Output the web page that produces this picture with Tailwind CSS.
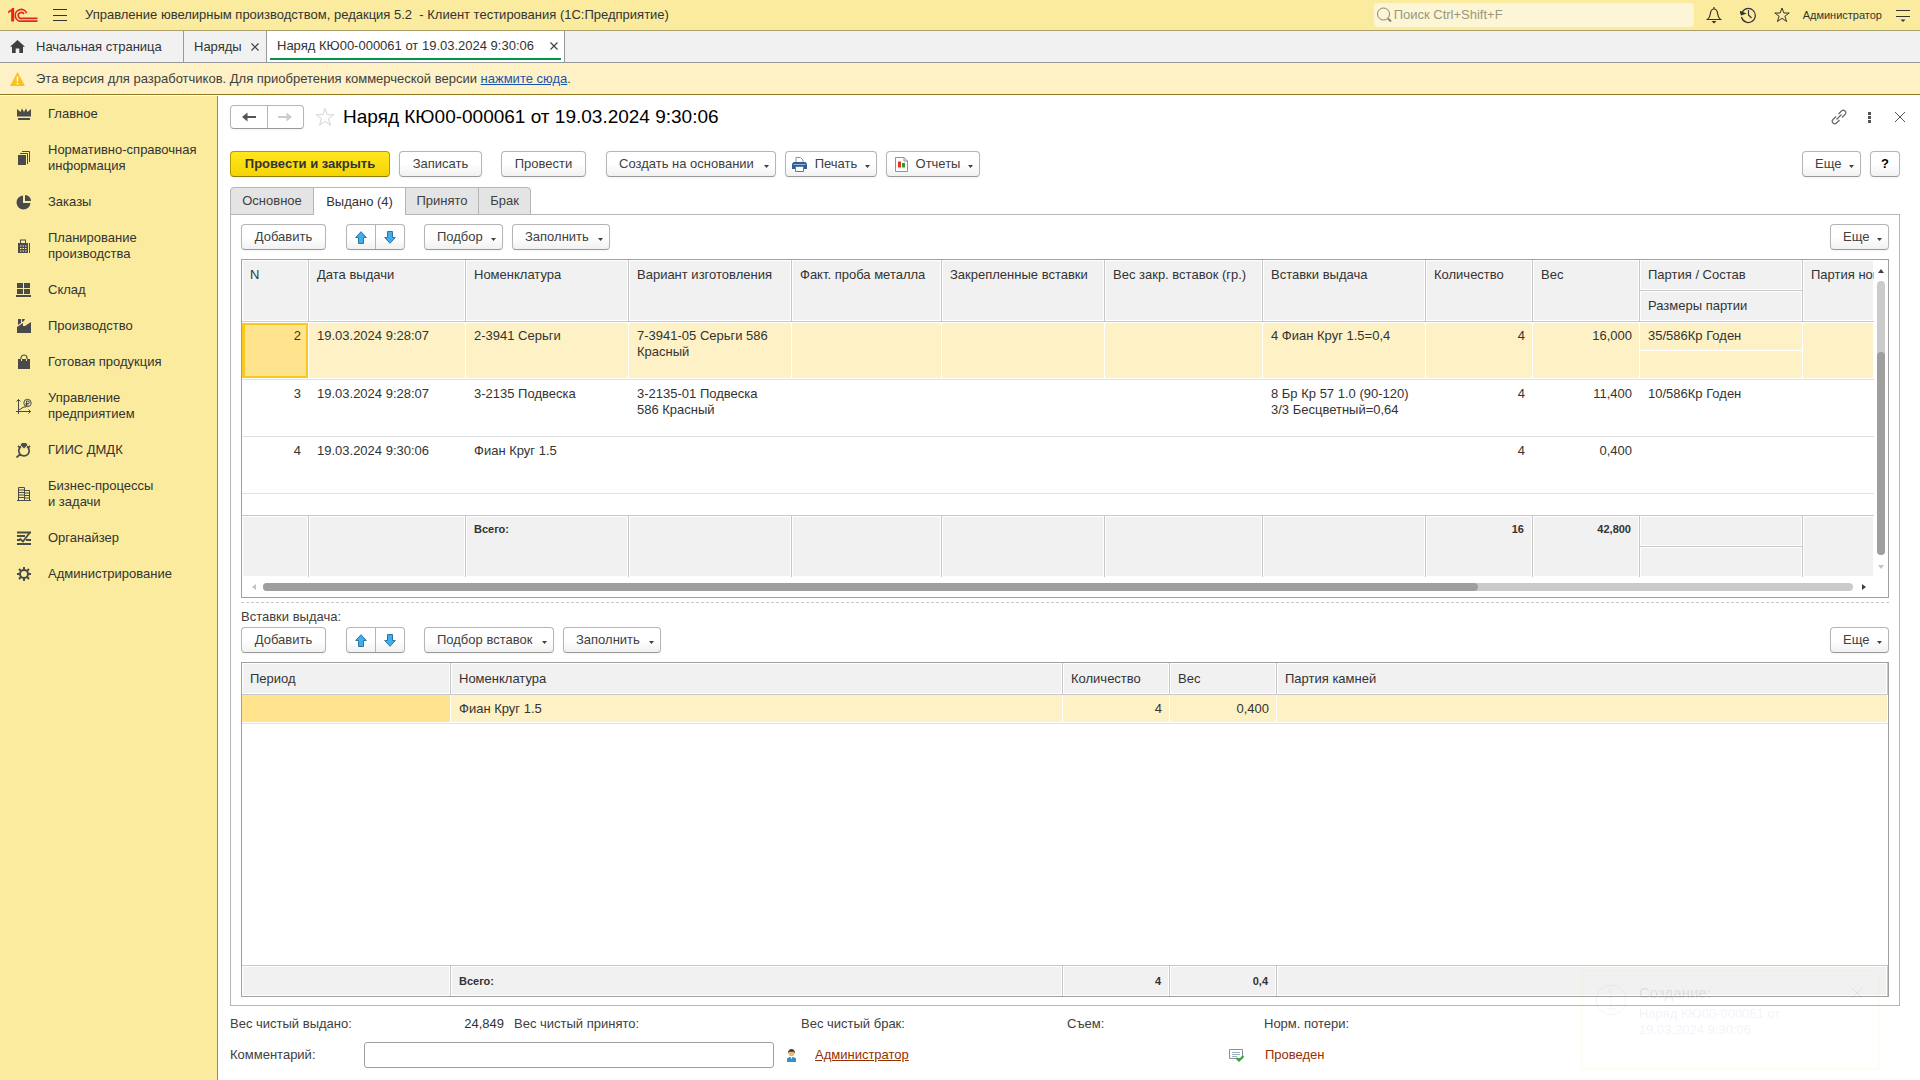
<!DOCTYPE html>
<html lang="ru">
<head>
<meta charset="utf-8">
<title>Наряд КЮ00-000061 от 19.03.2024 9:30:06</title>
<script src="https://cdn.jsdelivr.net/npm/@tailwindcss/browser@4"></script>
</head>
<body class="min-h-screen flex flex-col bg-white font-['Liberation_Sans',Arial,sans-serif] text-[13px] leading-4 text-[#404040]">

<svg class="hidden" aria-hidden="true">
  <symbol id="up" viewBox="0 0 12 13"><path d="M6 .7 11.3 6.5H8.5v6h-5v-6H.7z" fill="#41aeea" stroke="#2b76a3"/></symbol>
  <symbol id="down" viewBox="0 0 12 13"><path d="M6 12.3 11.3 6.5H8.5v-6h-5v6H.7z" fill="#41aeea" stroke="#2b76a3"/></symbol>
  <symbol id="caret" viewBox="0 0 5 3"><path d="M0 0h5L2.5 3z" fill="#404040"/></symbol>
</svg>

<header class="h-[31px] flex items-center bg-[#faeb9e] border-b border-[#a9a06c] pl-2 pr-2.5 text-[#333]">
  <svg class="w-[30px] h-[15px] shrink-0" viewBox="0 0 30 15" fill="none" stroke="#e0281e" stroke-width="1.7"><path d="M0 4.5 4 1.6V13.5M1 3.8 5.3.9V13.5"/><path d="M18.6 5.2A5.9 5.9 0 1 0 14 13.2H29.5"/><path d="M15.9 6A3 3 0 1 0 14 10.4H29.5"/></svg>
  <button class="ml-[15px] w-[14px] h-[14px] flex flex-col justify-between py-px shrink-0" aria-label="Меню"><span class="block h-px w-full bg-[#333]"></span><span class="block h-px w-full bg-[#333]"></span><span class="block h-px w-full bg-[#333]"></span></button>
  <div class="ml-[18px] whitespace-pre">Управление ювелирным производством, редакция 5.2  - Клиент тестирования (1С:Предприятие)</div>
  <label class="ml-auto w-80 h-6 flex items-center bg-[#fdf6d6] rounded-sm px-0.5 mr-[12px]">
    <svg class="w-4 h-4 shrink-0" viewBox="0 0 16 16" fill="none" stroke="#8a8568"><circle cx="7.5" cy="7" r="6"/><path d="m12 11.500 3 3" stroke-width="2"/></svg>
    <input type="search" aria-label="Поиск" placeholder="Поиск Ctrl+Shift+F" class="flex-1 min-w-0 bg-transparent outline-none pl-0.5 placeholder:text-[#9b9679]">
  </label>
  <button aria-label="Уведомления"><svg class="w-4 h-[18px]" viewBox="0 0 16 18" fill="none" stroke="#333" stroke-width="1.2"><path d="M1.500 13.500c2-1.500 2.500-3 2.800-5.500C4.700 4.500 5.500 3 8 3s3.300 1.500 3.700 5c.3 2.500.8 4 2.800 5.500zM8 3V1"/><path d="M5.500 15h5L8 17.500z" fill="#333" stroke="none"/></svg></button>
  <button class="ml-[18px]" aria-label="История"><svg class="w-4 h-[18px]" viewBox="0 0 16 18" fill="none" stroke="#333" stroke-width="1.200"><path d="M2 6.500A7 7 0 1 1 1.500 11M8.500 4v5l3 3"/><path d="M0 5.500 5 7.500 1.500 8.800z" fill="#333"/></svg></button>
  <button class="ml-[18px]" aria-label="Избранное"><svg class="w-4 h-4" viewBox="0 0 16 16" fill="none" stroke="#333"><path d="m8 1 1.900 5h5.300l-4.300 3.200 1.700 5.300L8 11.300l-4.600 3.200 1.700-5.300L.8 6h5.300z"/></svg></button>
  <span class="ml-[13px] text-[11px]">Администратор</span>
  <button class="ml-[14px]" aria-label="Настройки"><svg class="w-[14px] h-4" viewBox="0 0 14 16"><path d="M0 3.500h14M0 9.500h14" stroke="#333"/><path d="M4.500 12.500h5L7 15z" fill="#333"/></svg></button>
</header>

<nav class="h-8 flex bg-[#f1f1f1] border-b border-[#999] text-[#333]">
  <a href="#" class="w-[184px] flex items-center pl-2.5 border-r border-[#999]">
    <svg class="w-[15px] h-[13px] mr-[11px]" viewBox="0 0 15 13"><path d="M7.500 0 15 6.800h-2V13H9.300V8.500H5.700V13H2V6.800H0z" fill="#404040"/></svg>Начальная страница</a>
  <a href="#" class="w-[83px] flex items-center justify-between pl-2.5 pr-[7px] border-r border-[#999]">Наряды
    <svg class="w-2 h-2" viewBox="0 0 8 8" stroke="#404040" stroke-width="1.200"><path d="m.5.5 7 7m0-7-7 7"/></svg></a>
  <a href="#" class="w-[298px] px-[3px] pb-0.5 flex bg-white border-r border-[#999]"><span class="flex-1 flex items-center justify-between pl-[7px] pr-[3px] pt-0.5 border-b-2 border-[#009646]">Наряд КЮ00-000061 от 19.03.2024 9:30:06
    <svg class="w-2 h-2" viewBox="0 0 8 8" stroke="#404040" stroke-width="1.200"><path d="m.5.5 7 7m0-7-7 7"/></svg></span></a>
</nav>

<div class="h-8 flex items-center bg-[#fdf1c5] border-b border-[#8f7a1f] pl-2.5">
  <svg class="w-[15px] h-[14px] mr-[11px]" viewBox="0 0 15 14"><path d="M7.500 0 15 14H0z" fill="#fbc01c"/><path d="M7.500 4.500v5M7.500 10.800v1.600" stroke="#fff" stroke-width="1.500"/></svg>
  <span>Эта версия для разработчиков. Для приобретения коммерческой версии <a href="#" class="text-[#1a54b0] underline">нажмите сюда</a>.</span>
</div>

<div class="flex-1 flex pt-px">
  <aside class="w-[218px] shrink-0 bg-[#faeb9e] border-r border-[#96905f] text-[#333]">
    <ul>
      <li><a href="#" class="flex items-center py-2.5 pl-4"><svg class="w-4 h-4 mr-4 shrink-0" viewBox="0 0 16 16" fill="#4a4a4a"><path d="M1 3l3.500 3L6 2.500 8 6l2-3.500L11.500 6 15 3v7.500H1zM2 12h12v2H2z"/></svg>Главное</a></li>
      <li><a href="#" class="flex items-center py-2.5 pl-4"><svg class="w-4 h-4 mr-4 shrink-0" viewBox="0 0 16 16" fill="#4a4a4a"><path d="M2 5h8v10H2z"/><path d="M4 3.500h7.500V14M6 1.500h7.500V12" fill="none" stroke="#4a4a4a"/></svg><span>Нормативно-справочная<br>информация</span></a></li>
      <li><a href="#" class="flex items-center py-2.5 pl-4"><svg class="w-4 h-4 mr-4 shrink-0" viewBox="0 0 16 16" fill="#4a4a4a"><path d="M7 1.500V9h7.500A7 7 0 1 1 7 1.500z"/><path d="M9 1a6 6 0 0 1 6 6H9z"/></svg>Заказы</a></li>
      <li><a href="#" class="flex items-center py-2.5 pl-4"><svg class="w-4 h-4 mr-4 shrink-0" viewBox="0 0 16 16" fill="#4a4a4a"><path d="M2 5h2V1.500h6V5h2v10H2zM5 2.500V5h4V2.500zM13 5h1v10h-1z" fill-rule="evenodd"/><path d="M4 8h1.500M6.500 8H8M9 8h1.500M4 10.500h1.500M6.500 10.500H8M9 10.500h1.500M4 13h1.500M6.500 13H8M9 13h1.500" stroke="#faeb9e"/></svg><span>Планирование<br>производства</span></a></li>
      <li><a href="#" class="flex items-center py-2.5 pl-4"><svg class="w-4 h-4 mr-4 shrink-0" viewBox="0 0 16 16" fill="#4a4a4a"><path d="M1 1h6v5H1zM8 1h6v5H8zM1 7h6v5H1zM8 7h6v5H8zM0 13h15v2H0z"/></svg>Склад</a></li>
      <li><a href="#" class="flex items-center py-2.5 pl-4"><svg class="w-4 h-4 mr-4 shrink-0" viewBox="0 0 16 16" fill="#4a4a4a"><path d="M1 15V9l6-4v3l2 0 6-4v11zM2 1h3v4L2 7zM6 1h3l-1 2-2 1z"/></svg>Производство</a></li>
      <li><a href="#" class="flex items-center py-2.5 pl-4"><svg class="w-4 h-4 mr-4 shrink-0" viewBox="0 0 16 16" fill="#4a4a4a"><path d="M2 5h12v10H2z"/><path d="M5 7V4a3 3 0 0 1 6 0v3" fill="none" stroke="#4a4a4a" stroke-width="1.200"/><path d="M5.500 5v2M10.500 5v2" stroke="#faeb9e"/></svg>Готовая продукция</a></li>
      <li><a href="#" class="flex items-center py-2.5 pl-4"><svg class="w-4 h-4 mr-4 shrink-0" viewBox="0 0 16 16" fill="none" stroke="#4a4a4a"><path d="M2.500 16V1.500M.5 3.500l2-2 2 2M0 13.500h15M12.500 11.500l2 2-2 2M3 12l3-2 2-1h2"/><circle cx="11.500" cy="5" r="3.700"/><path d="M10.500 8V3H12a1.300 1.300 0 0 1 0 2.600H9.500M9.500 7h3"/></svg><span>Управление<br>предприятием</span></a></li>
      <li><a href="#" class="flex items-center py-2.5 pl-4"><svg class="w-4 h-4 mr-4 shrink-0" viewBox="0 0 16 16" fill="none" stroke="#4a4a4a" stroke-width="1.700"><path d="M5 4.500a5.200 5.200 0 1 0 6 0M4.500 12 .5 15.500"/><path d="M6 1h4l1.500 2L8 6.500 4.500 3z" fill="#4a4a4a" stroke="none"/><path d="M2 4l2.500 2M14 4l-2.500 2"/></svg>ГИИС ДМДК</a></li>
      <li><a href="#" class="flex items-center py-2.5 pl-4"><svg class="w-4 h-4 mr-4 shrink-0" viewBox="0 0 16 16" fill="none" stroke="#4a4a4a"><path d="M2.500 15V1.500h6V15M8.500 4.500h5V15M1 14.500h14M2 4h6M2 6.500h6M2 9h6M2 11.500h6M9 7h4M9 9.500h4M9 12h4"/></svg><span>Бизнес-процессы<br>и задачи</span></a></li>
      <li><a href="#" class="flex items-center py-2.5 pl-4"><svg class="w-4 h-4 mr-4 shrink-0" viewBox="0 0 16 16" fill="none" stroke="#4a4a4a" stroke-width="1.800"><path d="M1 2.500h14M1 6h8M1 10h3M10 10h5M1 14h14M3.500 8.500 7 11.500 13.500 3"/></svg>Органайзер</a></li>
      <li><a href="#" class="flex items-center py-2.5 pl-4"><svg class="w-4 h-4 mr-4 shrink-0" viewBox="0 0 16 16" fill="none" stroke="#4a4a4a" stroke-width="2"><circle cx="8" cy="8" r="4"/><path d="M8 1v3M8 12v3M1 8h3M12 8h3M3 3l2 2M11 11l2 2M3 13l2-2M11 5l2-2"/></svg>Администрирование</a></li>
    </ul>
  </aside>

  <main class="flex-1 min-w-0 flex flex-col pl-3 pr-5 pt-[9px] pb-3">
    <div class="h-6 flex items-center">
      <div class="w-[74px] h-6 flex border border-[#b5b5b5] border-b-[#999] rounded-sm shadow-xs">
        <button class="flex-1 flex items-center justify-center border-r border-[#b5b5b5]" aria-label="Назад"><svg class="w-[14px] h-[10px]" viewBox="0 0 14 10"><path d="M0 5 5.500.5V4H14v2H5.500v3.500z" fill="#555"/></svg></button>
        <button class="flex-1 flex items-center justify-center" aria-label="Вперед"><svg class="w-[14px] h-[10px]" viewBox="0 0 14 10"><path d="M14 5 8.500.5V4H0v2h8.500v3.500z" fill="#ccc"/></svg></button>
      </div>
      <svg class="w-5 h-5 ml-[11px]" viewBox="0 0 20 20" fill="none" stroke="#d4d4d4"><path d="m10 1.500 2.200 6.200h6.600l-5.300 4 2 6.600L10 14.300l-5.500 4 2-6.600-5.300-4h6.600z"/></svg>
      <h1 class="ml-2 text-[19px] leading-6 text-black">Наряд КЮ00-000061 от 19.03.2024 9:30:06</h1>
      <div class="ml-auto flex items-center">
        <button aria-label="Ссылка"><svg class="w-4 h-4" viewBox="0 0 16 16" fill="none" stroke="#666" stroke-width="1.200"><path d="m5.500 10.500 5-5M7.500 5l3-3a2.400 2.400 0 0 1 3.500 3.500l-3 3M8.500 11l-3 3A2.400 2.400 0 0 1 2 10.500l3-3"/></svg></button>
        <button class="ml-[21px]" aria-label="Еще действия"><svg class="w-[3px] h-[11px]" viewBox="0 0 3 11" fill="#555"><path d="M0 0h3v3H0zM0 4h3v3H0zM0 8h3v3H0z"/></svg></button>
        <button class="ml-[24px] mr-[-5px]" aria-label="Закрыть"><svg class="w-[10px] h-[10px]" viewBox="0 0 10 10" stroke="#555"><path d="m0 0 10 10M10 0 0 10"/></svg></button>
      </div>
    </div>

    <div class="mt-[22px] flex items-center">
      <button class="w-40 h-[26px] rounded-sm border border-[#b39b00] border-b-[#8f7c00] bg-linear-to-b from-[#ffe81c] to-[#f5d400] font-bold text-[#333] shadow-xs">Провести и закрыть</button>
      <button class="ml-[9px] w-[83px] h-[26px] rounded-sm border border-[#b5b5b5] border-b-[#999] bg-linear-to-b from-white from-50% to-[#f1f1f1] shadow-xs">Записать</button>
      <button class="ml-[19px] w-[85px] h-[26px] rounded-sm border border-[#b5b5b5] border-b-[#999] bg-linear-to-b from-white from-50% to-[#f1f1f1] shadow-xs">Провести</button>
      <button class="ml-5 w-[170px] h-[26px] flex items-center justify-between pl-3 pr-1.5 rounded-sm border border-[#b5b5b5] border-b-[#999] bg-linear-to-b from-white from-50% to-[#f1f1f1] shadow-xs">Создать на основании<svg class="w-[5px] h-[3px] mt-1"><use href="#caret"/></svg></button>
      <button class="ml-[9px] w-[92px] h-[26px] flex items-center justify-between px-1.5 rounded-sm border border-[#b5b5b5] border-b-[#999] bg-linear-to-b from-white from-50% to-[#f1f1f1] shadow-xs"><svg class="w-[15px] h-[15px]" viewBox="0 0 15 15"><path d="M4 6V.5h4.500L11 3v3" fill="#fff" stroke="#7d95ab"/><path d="M1.500 5h12L15 7v5H0V7z" fill="#2f5f8f"/><path d="M1.500 7.500h12" stroke="#9bb8d3"/><path d="M3.500 9.500h8v5h-8z" fill="#fff" stroke="#5c7d9c"/></svg>Печать<svg class="w-[5px] h-[3px] mt-1"><use href="#caret"/></svg></button>
      <button class="ml-[9px] w-[94px] h-[26px] flex items-center justify-between pl-2 pr-1.5 rounded-sm border border-[#b5b5b5] border-b-[#999] bg-linear-to-b from-white from-50% to-[#f1f1f1] shadow-xs"><svg class="w-[13px] h-[15px]" viewBox="0 0 13 15"><path d="M.5.5h8.500l3.500 3.500v10.500H.5zM9 .5V4h3.500" fill="#fff" stroke="#8296a8"/><path d="M3 4.500h3v6H3z" fill="#e8321e"/><path d="M7 6h3v4.500H7z" fill="#2e9b2e"/></svg>Отчеты<svg class="w-[5px] h-[3px] mt-1"><use href="#caret"/></svg></button>
      <button class="ml-auto w-[59px] h-[26px] flex items-center justify-between pl-3 pr-1.5 rounded-sm border border-[#b5b5b5] border-b-[#999] bg-linear-to-b from-white from-50% to-[#f1f1f1] shadow-xs">Еще<svg class="w-[5px] h-[3px] mt-1"><use href="#caret"/></svg></button>
      <button class="ml-[9px] w-[30px] h-[26px] rounded-sm border border-[#b5b5b5] border-b-[#999] bg-linear-to-b from-white from-50% to-[#f1f1f1] shadow-xs font-bold text-black">?</button>
    </div>

    <div class="mt-2.5 flex h-[28px] -mb-px z-10" role="tablist">
      <button role="tab" class="w-[84px] border border-[#b5b5b5] rounded-tl-sm bg-[#e4e4e4]">Основное</button>
      <button role="tab" aria-selected="true" class="w-[91px] border-t border-[#b5b5b5] bg-white text-[#333]">Выдано (4)</button>
      <button role="tab" class="w-[74px] border border-[#b5b5b5] bg-[#e4e4e4]">Принято</button>
      <button role="tab" class="-ml-px w-[53px] border border-[#b5b5b5] rounded-tr-sm bg-[#e4e4e4]">Брак</button>
    </div>

    <section class="flex-1 flex flex-col border border-[#b5b5b5] px-2.5 pt-[9px] pb-2">
      <div class="flex">
        <button class="w-[85px] h-[26px] rounded-sm border border-[#b5b5b5] border-b-[#999] bg-linear-to-b from-white from-50% to-[#f1f1f1] shadow-xs">Добавить</button>
        <div class="ml-5 w-[59px] h-[26px] flex rounded-sm border border-[#b5b5b5] border-b-[#999] bg-linear-to-b from-white from-50% to-[#f1f1f1] shadow-xs">
          <button class="flex-1 flex items-center justify-center border-r border-[#b5b5b5]" aria-label="Вверх"><svg class="w-3 h-[13px]"><use href="#up"/></svg></button>
          <button class="flex-1 flex items-center justify-center" aria-label="Вниз"><svg class="w-3 h-[13px]"><use href="#down"/></svg></button>
        </div>
        <button class="ml-[19px] w-[79px] h-[26px] flex items-center justify-between pl-3 pr-1.5 rounded-sm border border-[#b5b5b5] border-b-[#999] bg-linear-to-b from-white from-50% to-[#f1f1f1] shadow-xs">Подбор<svg class="w-[5px] h-[3px] mt-1"><use href="#caret"/></svg></button>
        <button class="ml-[9px] w-[98px] h-[26px] flex items-center justify-between pl-3 pr-1.5 rounded-sm border border-[#b5b5b5] border-b-[#999] bg-linear-to-b from-white from-50% to-[#f1f1f1] shadow-xs">Заполнить<svg class="w-[5px] h-[3px] mt-1"><use href="#caret"/></svg></button>
        <button class="ml-auto w-[59px] h-[26px] flex items-center justify-between pl-3 pr-1.5 rounded-sm border border-[#b5b5b5] border-b-[#999] bg-linear-to-b from-white from-50% to-[#f1f1f1] shadow-xs">Еще<svg class="w-[5px] h-[3px] mt-1"><use href="#caret"/></svg></button>
      </div>

      <div class="mt-[9px] h-[339px] border border-[#a0a0a0] flex flex-col text-[#333]">
        <div class="flex">
          <div class="flex-1 min-w-0 overflow-hidden">
            <table class="w-full table-fixed border-separate border-spacing-0 text-left [&_th]:font-normal [&_th]:align-top [&_td]:align-top [&_th]:px-2 [&_td]:px-2 [&_thead_th]:bg-[#f1f1f1] [&_thead_th]:border-r [&_thead_th]:border-b [&_thead_th]:border-[#c8c8c8] [&_thead_th]:pt-[7px] [&_thead_th]:shadow-[inset_0_0_0_1px_#fff] [&_tfoot_td]:bg-[#f1f1f1] [&_tfoot_td]:border-r [&_tfoot_td]:border-t [&_tfoot_td]:border-[#c8c8c8] [&_tfoot_td]:pt-[5px] [&_tfoot_td]:shadow-[inset_0_0_0_1px_#fff] [&_tfoot]:text-[11px] [&_tfoot]:font-bold whitespace-nowrap">
              <colgroup><col class="w-[67px]"><col class="w-[157px]"><col class="w-[163px]"><col class="w-[163px]"><col class="w-[150px]"><col class="w-[163px]"><col class="w-[158px]"><col class="w-[163px]"><col class="w-[107px]"><col class="w-[107px]"><col class="w-[163px]"><col></colgroup>
              <thead>
                <tr class="h-[31px]"><th rowspan="2">N</th><th rowspan="2">Дата выдачи</th><th rowspan="2">Номенклатура</th><th rowspan="2">Вариант изготовления</th><th rowspan="2">Факт. проба металла</th><th rowspan="2">Закрепленные вставки</th><th rowspan="2">Вес закр. вставок (гр.)</th><th rowspan="2">Вставки выдача</th><th rowspan="2">Количество</th><th rowspan="2">Вес</th><th>Партия / Состав</th><th rowspan="2" class="overflow-hidden border-r-0!">Партия ном</th></tr>
                <tr class="h-[31px]"><th>Размеры партии</th></tr>
              </thead>
              <tbody class="[&_td]:pt-[6px] [&_td]:border-[#e0e0e0]">
                <tr class="h-[29px] [&_td]:bg-[#fdf1c5] [&_td]:shadow-[inset_-1px_0_0_0_#fff,inset_0_1px_0_0_#fff,inset_0_-1px_0_0_#fff]"><td rowspan="2" class="border-b text-right bg-[#ffe48d]! shadow-[inset_0_1px_0_0_#fff,inset_-1px_-1px_0_0_#fff,inset_0_0_0_3px_#f9c81e]!">2</td><td rowspan="2" class="border-b">19.03.2024 9:28:07</td><td rowspan="2" class="border-b">2-3941 Серьги</td><td rowspan="2" class="border-b">7-3941-05 Серьги 586<br>Красный</td><td rowspan="2" class="border-b"></td><td rowspan="2" class="border-b"></td><td rowspan="2" class="border-b"></td><td rowspan="2" class="border-b">4 Фиан Круг 1.5=0,4</td><td rowspan="2" class="border-b text-right">4</td><td rowspan="2" class="border-b text-right">16,000</td><td>35/586Кр Годен</td><td rowspan="2" class="border-b"></td></tr>
                <tr class="h-[29px]"><td class="border-b bg-[#fdf1c5] shadow-[inset_-1px_-1px_0_0_#fff]"></td></tr>
                <tr class="h-[57px] [&_td]:border-b"><td class="text-right">3</td><td>19.03.2024 9:28:07</td><td>3-2135 Подвеска</td><td>3-2135-01 Подвеска<br>586 Красный</td><td></td><td></td><td></td><td>8 Бр Кр 57 1.0 (90-120)<br>3/3 Бесцветный=0,64</td><td class="text-right">4</td><td class="text-right">11,400</td><td>10/586Кр Годен</td><td></td></tr>
                <tr class="h-[57px] [&_td]:border-b"><td class="text-right">4</td><td>19.03.2024 9:30:06</td><td>Фиан Круг 1.5</td><td></td><td></td><td></td><td></td><td></td><td class="text-right">4</td><td class="text-right">0,400</td><td></td><td></td></tr>
                <tr class="h-[21px]"><td colspan="12" class="p-0!"></td></tr>
              </tbody>
              <tfoot>
                <tr class="h-[31px]"><td rowspan="2"></td><td rowspan="2"></td><td rowspan="2">Всего:</td><td rowspan="2"></td><td rowspan="2"></td><td rowspan="2"></td><td rowspan="2"></td><td rowspan="2"></td><td rowspan="2" class="text-right">16</td><td rowspan="2" class="text-right">42,800</td><td></td><td rowspan="2" class="border-r-0!"></td></tr>
                <tr class="h-[31px]"><td></td></tr>
              </tfoot>
            </table>
          </div>
          <div class="w-[14px] flex flex-col items-center pt-[9px] pb-2">
            <svg class="w-1.5 h-1" viewBox="0 0 6 4"><path d="M0 4h6L3 0z" fill="#404040"/></svg>
            <div class="mt-2 w-2 flex-1 flex flex-col justify-end rounded-full bg-[#cbcbcb]"><div class="w-2 h-[203px] rounded-full bg-[#9f9f9f]"></div></div>
            <svg class="mt-2.5 w-1.5 h-1" viewBox="0 0 6 4"><path d="M0 0h6L3 4z" fill="#c4c4c4"/></svg>
          </div>
        </div>
        <div class="flex-1 flex items-center pl-2.5 pr-[22px]">
          <svg class="w-1 h-1.5" viewBox="0 0 4 6"><path d="M4 0v6L0 3z" fill="#c4c4c4"/></svg>
          <div class="ml-[7px] flex-1 h-2 rounded-full bg-[#cbcbcb]"><div class="h-2 w-[1215px] rounded-full bg-[#9f9f9f]"></div></div>
          <svg class="ml-[9px] w-1 h-1.5" viewBox="0 0 4 6"><path d="M0 0v6l4-3z" fill="#404040"/></svg>
        </div>
      </div>

      <div class="mt-1 border-t border-dashed border-[#c8c8c8]"></div>
      <h2 class="mt-1 h-5 leading-5">Вставки выдача:</h2>
      <div class="flex">
        <button class="w-[85px] h-[26px] rounded-sm border border-[#b5b5b5] border-b-[#999] bg-linear-to-b from-white from-50% to-[#f1f1f1] shadow-xs">Добавить</button>
        <div class="ml-5 w-[59px] h-[26px] flex rounded-sm border border-[#b5b5b5] border-b-[#999] bg-linear-to-b from-white from-50% to-[#f1f1f1] shadow-xs">
          <button class="flex-1 flex items-center justify-center border-r border-[#b5b5b5]" aria-label="Вверх"><svg class="w-3 h-[13px]"><use href="#up"/></svg></button>
          <button class="flex-1 flex items-center justify-center" aria-label="Вниз"><svg class="w-3 h-[13px]"><use href="#down"/></svg></button>
        </div>
        <button class="ml-[19px] w-[130px] h-[26px] flex items-center justify-between pl-3 pr-1.5 rounded-sm border border-[#b5b5b5] border-b-[#999] bg-linear-to-b from-white from-50% to-[#f1f1f1] shadow-xs">Подбор вставок<svg class="w-[5px] h-[3px] mt-1"><use href="#caret"/></svg></button>
        <button class="ml-[9px] w-[98px] h-[26px] flex items-center justify-between pl-3 pr-1.5 rounded-sm border border-[#b5b5b5] border-b-[#999] bg-linear-to-b from-white from-50% to-[#f1f1f1] shadow-xs">Заполнить<svg class="w-[5px] h-[3px] mt-1"><use href="#caret"/></svg></button>
        <button class="ml-auto w-[59px] h-[26px] flex items-center justify-between pl-3 pr-1.5 rounded-sm border border-[#b5b5b5] border-b-[#999] bg-linear-to-b from-white from-50% to-[#f1f1f1] shadow-xs">Еще<svg class="w-[5px] h-[3px] mt-1"><use href="#caret"/></svg></button>
      </div>

      <div class="mt-[9px] flex-1 flex border border-[#a0a0a0] text-[#333]">
        <table class="w-full table-fixed border-separate border-spacing-0 text-left [&_th]:font-normal [&_th]:px-2 [&_td]:px-2 [&_th]:bg-[#f1f1f1] [&_th]:border-r [&_th]:border-b [&_th]:border-[#c8c8c8] [&_th]:shadow-[inset_0_0_0_1px_#fff] [&_tfoot_td]:bg-[#f1f1f1] [&_tfoot_td]:border-r [&_tfoot_td]:border-t [&_tfoot_td]:border-[#c8c8c8] [&_tfoot_td]:shadow-[inset_0_0_0_1px_#fff] [&_tfoot]:text-[11px] [&_tfoot]:font-bold">
          <colgroup><col class="w-[209px]"><col class="w-[612px]"><col class="w-[107px]"><col class="w-[107px]"><col></colgroup>
          <thead><tr class="h-8"><th>Период</th><th>Номенклатура</th><th>Количество</th><th>Вес</th><th>Партия камней</th></tr></thead>
          <tbody>
            <tr class="h-[29px] [&_td]:bg-[#fdf1c5] [&_td]:border-b [&_td]:border-[#e0e0e0] [&_td]:shadow-[inset_-1px_-1px_0_0_#fff]"><td class="bg-[#ffe48d]!"></td><td>Фиан Круг 1.5</td><td class="text-right">4</td><td class="text-right">0,400</td><td></td></tr>
            <tr><td colspan="5"></td></tr>
          </tbody>
          <tfoot><tr class="h-[31px]"><td></td><td>Всего:</td><td class="text-right">4</td><td class="text-right">0,4</td><td></td></tr></tfoot>
        </table>
      </div>
    </section>

    <div class="mt-2.5 h-4 flex">
      <span class="w-[190px]">Вес чистый выдано:</span><span class="w-[84px] text-right mr-2.5 text-[#333]">24,849</span>
      <span class="w-[287px]">Вес чистый принято:</span><span class="w-[266px]">Вес чистый брак:</span><span class="w-[197px]">Съем:</span><span>Норм. потери:</span>
    </div>
    <div class="mt-2.5 h-[26px] flex items-center">
      <label for="comment" class="w-[134px]">Комментарий:</label>
      <input id="comment" type="text" class="w-[410px] h-[26px] px-2 border border-[#a0a0a0] rounded-[3px] bg-white">
      <svg class="ml-[13px] w-[9px] h-[13px]" viewBox="0 0 9 13"><path d="M0 13V9.500L2.500 8h4L9 9.500V13z" fill="#3a8fc4"/><circle cx="4.500" cy="4.200" r="3" fill="#e8b878"/><path d="M1 4.500C.8 1.500 2.500 0 4.500 0S8.200 1.500 8 4.500L6.800 2.800H2.200z" fill="#4a3a2a"/><path d="m3.500 8 1 2 1-2z" fill="#fff"/></svg>
      <a href="#" class="ml-[19px] w-[414px] text-[#963000] underline">Администратор</a>
      <svg class="w-[15px] h-[13px]" viewBox="0 0 15 13"><path d="M.5.500h13v9H.5z" fill="#fff" stroke="#7f93a3"/><path d="M3 3.500h8M3 5.500h8M3 7.500h5" stroke="#9fb0bd"/><path d="m7.500 9 2.500 2.500L14.500 7" fill="none" stroke="#2ea836" stroke-width="2"/></svg>
      <span class="ml-[21px] text-[#963000]">Проведен</span>
    </div>
  </main>
</div>

<div class="fixed z-20 right-10 bottom-2.5 w-[299px] h-[100px] border-2 border-[#ffe48d] opacity-10 flex pt-3 pl-3 pr-4">
  <svg class="w-8 h-8 shrink-0" viewBox="0 0 32 32" fill="none" stroke="#999"><circle cx="16" cy="16" r="15"/><path d="M12 13h4v12M12 25h9"/><circle cx="15.500" cy="7" r="1.500"/></svg>
  <div class="ml-3 flex-1"><div class="text-[15px] leading-[18px]">Создание:</div><a href="#" class="block mt-1 text-[#6a8fd0]">Наряд КЮ00-000061 от<br>19.03.2024 9:30:06</a></div>
  <svg class="w-2.5 h-2.5 mt-1" viewBox="0 0 10 10" stroke="#555"><path d="m0 0 10 10M10 0 0 10"/></svg>
</div>
</body>
</html>
